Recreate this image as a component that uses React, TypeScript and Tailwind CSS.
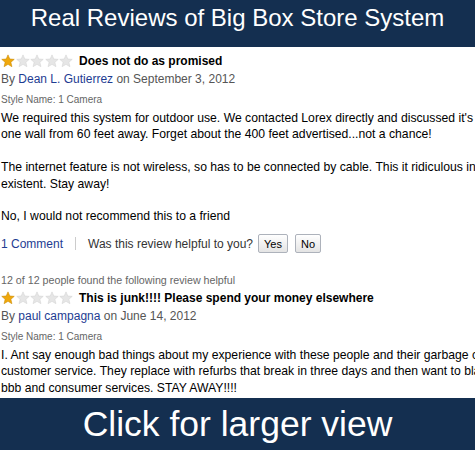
import React from 'react';

const Star = ({ filled }: { filled: boolean }) => (
  <svg width="14" height="14" viewBox="0 0 24 24" className="shrink-0">
    <path
      d="M12 1.5l3.1 7.1 7.6.6-5.8 5 1.8 7.5L12 17.7l-6.7 4 1.8-7.5-5.8-5 7.6-.6z"
      fill={filled ? '#f0a80c' : '#e6e6e6'}
      stroke={filled ? '#c98a00' : '#d4d4d4'}
      strokeWidth="1"
    />
  </svg>
);

const Stars = ({ count }: { count: number }) => (
  <div className="flex items-center gap-[0.5px] w-[72px]">
    {[0, 1, 2, 3, 4].map((i) => (
      <Star key={i} filled={i < count} />
    ))}
  </div>
);

const Review = ({
  helpful,
  title,
  author,
  date,
  children,
}: {
  helpful?: string;
  title: string;
  author: string;
  date: string;
  children: React.ReactNode;
}) => (
  <div className="flex flex-col">
    {helpful && <div className="text-[10.7px] text-[#666] leading-[14px] mb-[2px]">{helpful}</div>}
    <div className="flex items-center h-[18px]">
      <Stars count={1} />
      <span className="ml-[6px] text-[12px] font-bold text-black">{title}</span>
    </div>
    <div className="text-[12px] text-[#555] leading-[18px]">
      By <span className="text-[#1e3c92]">{author}</span> on {date}
    </div>
    <div className="text-[10px] text-[#666] leading-[14px] mt-[5px]">Style Name: 1 Camera</div>
    <div className="text-[12.2px] text-black leading-[16.4px] mt-[3px]">{children}</div>
  </div>
);

const App: React.FC = () => {
  return (
    <div className="w-[475px] h-[450px] overflow-hidden flex flex-col bg-white" style={{ fontFamily: '"Liberation Sans", Arial, sans-serif' }}>
      {/* Header band */}
      <div className="h-[47px] bg-[#142f50] flex justify-center pt-[4px] shrink-0">
        <h1 className="text-white text-[24px] leading-[28px]">Real Reviews of Big Box Store System</h1>
      </div>

      {/* Reviews */}
      <div className="flex-1 overflow-hidden pl-[1px] pt-[5px] whitespace-nowrap">
        <Review title="Does not do as promised" author="Dean L. Gutierrez" date="September 3, 2012">
          <p>We required this system for outdoor use. We contacted Lorex directly and discussed it's range</p>
          <p>one wall from 60 feet away. Forget about the 400 feet advertised...not a chance!</p>
          <p className="h-[16.4px]"></p>
          <p>The internet feature is not wireless, so has to be connected by cable. This it ridiculous in this</p>
          <p>existent. Stay away!</p>
          <p className="h-[16.4px]"></p>
          <p>No, I would not recommend this to a friend</p>
        </Review>

        <div className="flex items-center h-[22px] mt-[8px] text-[12px]">
          <span className="text-[#1e3c92]">1 Comment</span>
          <span className="w-px h-[13px] bg-[#ccc] ml-[12px] mr-[12px]"></span>
          <span className="text-[#333]">Was this review helpful to you?</span>
          <button className="ml-[5px] h-[19px] px-[5px] text-[11px] text-black border border-[#adb2bb] rounded-[2px] bg-gradient-to-b from-white to-[#e4e4e4]">Yes</button>
          <button className="ml-[7px] h-[19px] px-[5px] text-[11px] text-black border border-[#adb2bb] rounded-[2px] bg-gradient-to-b from-white to-[#e4e4e4]">No</button>
        </div>

        <div className="mt-[18px]">
          <Review
            helpful="12 of 12 people found the following review helpful"
            title="This is junk!!!! Please spend your money elsewhere"
            author="paul campagna"
            date="June 14, 2012"
          >
            <p>I. Ant say enough bad things about my experience with these people and their garbage custo</p>
            <p>customer service. They replace with refurbs that break in three days and then want to blame</p>
            <p>bbb and consumer services. STAY AWAY!!!!</p>
          </Review>
        </div>
      </div>

      {/* Footer band */}
      <div className="h-[52px] bg-[#142f50] flex items-center justify-center shrink-0">
        <span className="text-white text-[35.5px] leading-[40px]">Click for larger view</span>
      </div>
    </div>
  );
};

export default App;
